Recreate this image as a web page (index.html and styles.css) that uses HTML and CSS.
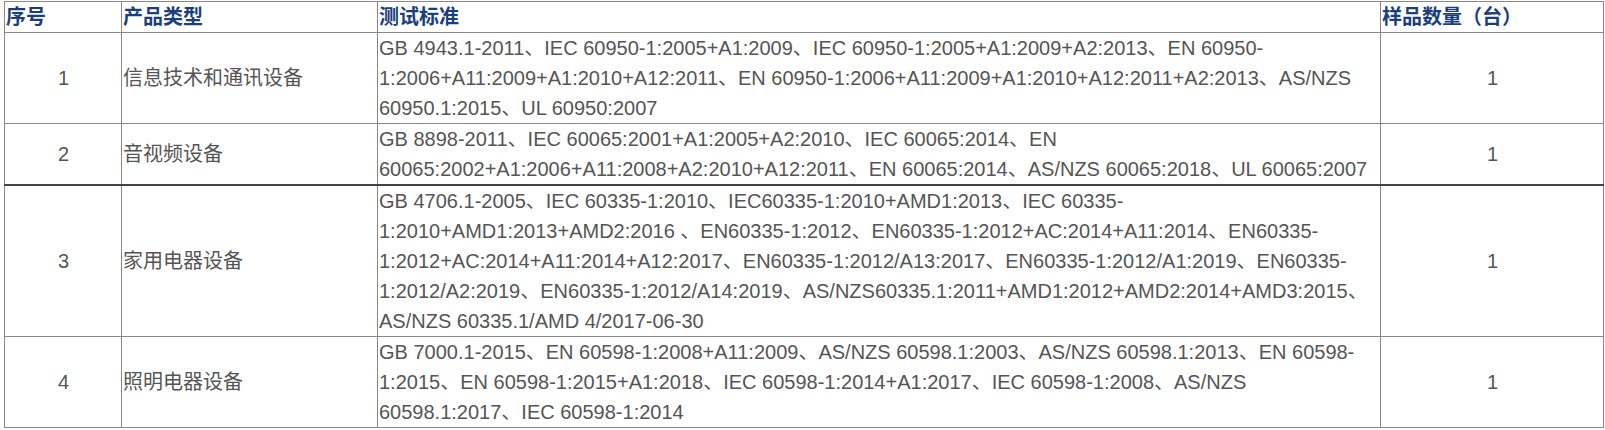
FILE: index.html
```html
<!DOCTYPE html>
<html lang="zh-CN">
<head>
<meta charset="utf-8">
<title>测试标准</title>
<link rel="stylesheet" href="styles.css">
</head>
<body>
<div class="page">
<table class="std-table">
  <colgroup>
    <col class="c-no">
    <col class="c-type">
    <col class="c-std">
    <col class="c-qty">
  </colgroup>
  <thead>
    <tr>
      <th>序号</th>
      <th>产品类型</th>
      <th>测试标准</th>
      <th>样品数量（台）</th>
    </tr>
  </thead>
  <tbody>
    <tr>
      <td class="center">1</td>
      <td>信息技术和通讯设备</td>
      <td>GB 4943.1-2011、IEC 60950-1:2005+A1:2009、IEC 60950-1:2005+A1:2009+A2:2013、EN 60950-<br>1:2006+A11:2009+A1:2010+A12:2011、EN 60950-1:2006+A11:2009+A1:2010+A12:2011+A2:2013、AS/NZS<br>60950.1:2015、UL 60950:2007</td>
      <td class="center">1</td>
    </tr>
    <tr>
      <td class="center">2</td>
      <td>音视频设备</td>
      <td>GB 8898-2011、IEC 60065:2001+A1:2005+A2:2010、IEC 60065:2014、EN<br>60065:2002+A1:2006+A11:2008+A2:2010+A12:2011、EN 60065:2014、AS/NZS 60065:2018、UL 60065:2007</td>
      <td class="center">1</td>
    </tr>
    <tr class="sep">
      <td class="center">3</td>
      <td>家用电器设备</td>
      <td>GB 4706.1-2005、IEC 60335-1:2010、IEC60335-1:2010+AMD1:2013、IEC 60335-<br>1:2010+AMD1:2013+AMD2:2016 、EN60335-1:2012、EN60335-1:2012+AC:2014+A11:2014、EN60335-<br>1:2012+AC:2014+A11:2014+A12:2017、EN60335-1:2012/A13:2017、EN60335-1:2012/A1:2019、EN60335-<br>1:2012/A2:2019、EN60335-1:2012/A14:2019、AS/NZS60335.1:2011+AMD1:2012+AMD2:2014+AMD3:2015、<br>AS/NZS 60335.1/AMD 4/2017-06-30</td>
      <td class="center">1</td>
    </tr>
    <tr>
      <td class="center">4</td>
      <td>照明电器设备</td>
      <td>GB 7000.1-2015、EN 60598-1:2008+A11:2009、AS/NZS 60598.1:2003、AS/NZS 60598.1:2013、EN 60598-<br>1:2015、EN 60598-1:2015+A1:2018、IEC 60598-1:2014+A1:2017、IEC 60598-1:2008、AS/NZS<br>60598.1:2017、IEC 60598-1:2014</td>
      <td class="center">1</td>
    </tr>
  </tbody>
</table>
</div>
</body>
</html>
```
FILE: styles.css
```css
html, body {
  margin: 0;
  padding: 0;
  background: #ffffff;
}

.page {
  padding: 1px 0 0 4px;
}

.std-table {
  border-collapse: collapse;
  table-layout: fixed;
  width: 1599px;
  font-family: "Liberation Sans", Arial, "Noto Sans CJK SC", sans-serif;
  font-size: 20px;
  line-height: 30px;
  color: #555555;
}

.c-no { width: 117px; }
.c-type { width: 256px; }
.c-std { width: 1003px; }
.c-qty { width: 223px; }

.std-table th,
.std-table td {
  border: 1px solid #888888;
  padding: 0 0 0 1px;
  vertical-align: middle;
  text-align: left;
  white-space: nowrap;
}

.std-table th {
  font-weight: bold;
  color: #1b3f7c;
}

.std-table td.center {
  text-align: center;
}

.std-table tr.sep td {
  border-top: 2px solid #444444;
}
```
